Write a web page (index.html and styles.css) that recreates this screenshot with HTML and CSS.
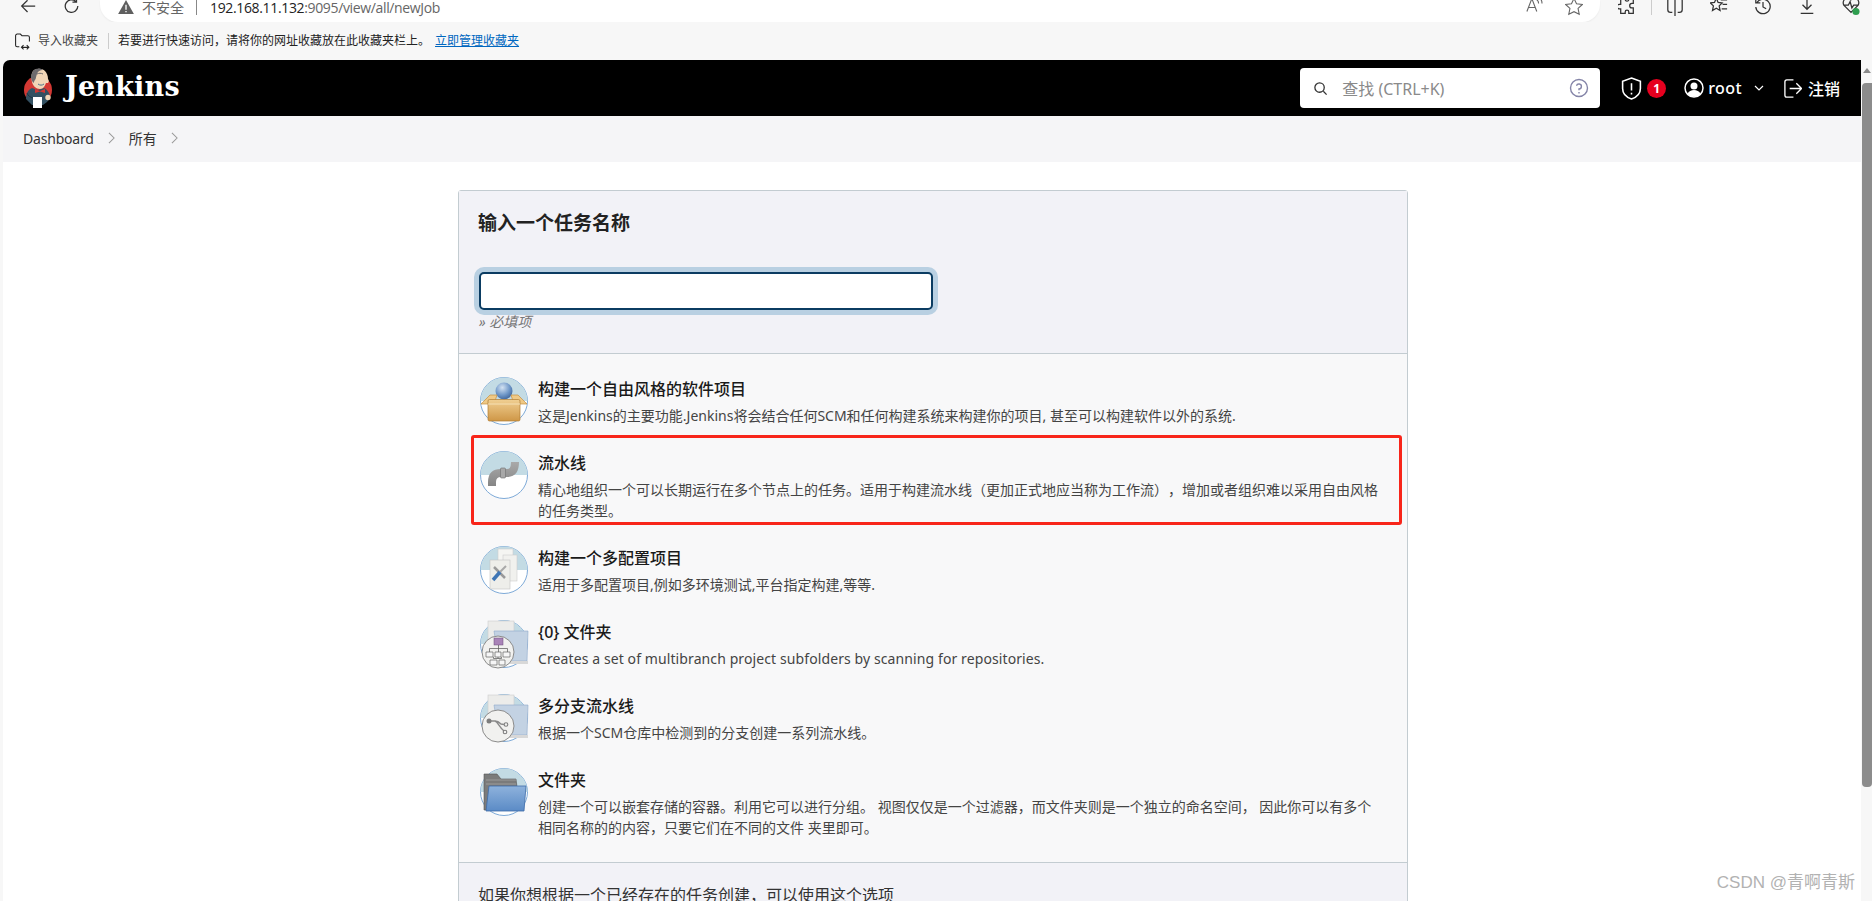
FILE: index.html
```html
<!DOCTYPE html>
<html lang="zh-CN">
<head>
<meta charset="utf-8">
<title>Jenkins</title>
<link rel="stylesheet" href="styles.css">
</head>
<body>
<div class="toolbar">
  <div class="nav-btns">
    <svg class="tb-icon" viewBox="0 0 20 20"><path d="M18 9H3M9.500 2.500 3 9l6.500 6.500"/></svg>
    <svg class="tb-icon" viewBox="0 0 20 20"><path d="M16.500 9a7 7 0 1 1-2.300-5.200M15 0v4.500h-4.500"/></svg>
  </div>
  <div class="address">
    <svg class="warn" viewBox="0 0 18 16"><path d="M9 0 18 16H0Z" fill="#5f5f5f"/><path d="M9 5.500V11M9 12.500v1.500" stroke="#fff" stroke-width="1.500"/></svg>
    <span class="insecure">不安全</span>
    <span class="addr-sep"></span>
    <span class="url">192.168.11.132<span class="url-rest">:9095/view/all/newJob</span></span>
    <span class="addr-tools">
      <svg class="tb-icon thin" viewBox="0 0 20 20"><path d="M1 15 6 2h1l5 13M3 10.500h7M12 2c1.500 1 2 2.500 2 4M15 0c2 1.500 2.800 3.500 2.800 6"/></svg>
      <svg class="tb-icon thin" viewBox="0 0 20 20"><path d="m10 .5 2.800 6 6.500.7-4.800 4.400 1.300 6.400L10 15.200 4.200 18l1.300-6.400L.7 7.200l6.500-.7Z"/></svg>
    </span>
  </div>
  <div class="browser-tools">
    <svg class="tb-icon" viewBox="0 0 20 20"><path d="M8 0v1.500a2 2 0 0 0 4 0V0h5v6h-1.500a2.500 2.500 0 0 0 0 5H17v6h-5v-1.500a2 2 0 0 0-4 0V17H3v-5H1.500a2.500 2.500 0 0 1 0-5H3V0Z"/></svg>
    <span class="tool-sep"></span>
    <svg class="tb-icon" viewBox="0 0 20 20"><path d="M10-2v22M7 0H5a3 3 0 0 0-3 3v10a3 3 0 0 0 3 3h2M13 0h2a3 3 0 0 1 3 3v10a3 3 0 0 1-3 3h-2"/></svg>
    <svg class="tb-icon" viewBox="0 0 20 20"><path d="m7 0 2 5 4.500.5-3.300 3.300 1 5L7 11.300 2.800 13.800l1-5L.5 5.500 5 5ZM12 2h7M14 7h5M13 12h6"/></svg>
    <svg class="tb-icon" viewBox="0 0 20 20"><path d="M3 5.500A8 8 0 1 1 2 10M2 0v5.500h5M10 4.500V10l3.500 2"/></svg>
    <svg class="tb-icon" viewBox="0 0 20 20"><path d="M10-1v13M5 7.500l5 5 5-5M3 17h14"/></svg>
    <svg class="tb-icon" viewBox="0 0 20 20"><path d="M10 16 2 8C0 4 3 0 6 0c2 0 3 1 4 2 1-1 2-2 4-2 3 0 6 4 4 8ZM2 8h5l2-4 2 7 2-3h5"/><circle cx="15.500" cy="15" r="4" fill="#2e9e4f" stroke="none"/></svg>
  </div>
</div>

<div class="favbar">
  <svg class="fav-icon" viewBox="0 0 16 16"><path d="M5 13H3a1.500 1.500 0 0 1-1.500-1.500v-9A1.500 1.500 0 0 1 3 1h3l1.500 1.500H13A1.500 1.500 0 0 1 14.500 4v4M7 13.500h7M9 11.500l-2 2 2 2M12 11.500l2 2-2 2"/></svg>
  <span class="fav-import">导入收藏夹</span>
  <span class="fav-sep"></span>
  <span class="fav-tip">若要进行快速访问，请将你的网址收藏放在此收藏夹栏上。</span>
  <a class="fav-link" href="#">立即管理收藏夹</a>
</div>

<div class="viewport">
  <div class="page">
    <header class="jenkins-header">
      <div class="brand">
        <svg class="logo" viewBox="0 0 28 40">
          <circle cx="14" cy="22" r="14" fill="#d33833"/>
          <path d="M2 31c0-6 2-9 6-11l6 2 6-2c4 2 6 6 6 10l-3 4-4 3H8Z" fill="#335061"/>
          <path d="M9 3c3-3 9-3 12 0 2 2 3 5 3 8 1 1 1 3 0 4-1 0-1 0-2 0-1 3-3 6-6 6-4 0-7-3-8-7-1-4-1-8 1-11Z" fill="#f0d6b7"/>
          <path d="M9 3c3-3 7-3 10-1-3 0-5 1-6 4-1 2-1 5-2 6-1 1-1 2-1 3-2-1-3-4-3-6 0-2 1-4 2-6Z" fill="#6d6b6d"/>
          <path d="M13 6c2-1 4-1 6 0" fill="none" stroke="#6d6b6d" stroke-width="1"/>
          <path d="M14 16c2 1.500 4 1.500 6 0" fill="none" stroke="#49728b" stroke-width="1"/>
          <path d="M11 21l5 2 5-2v4l-5-1.500L11 25Z" fill="#d33833"/>
          <path d="M9 29h9v11H9Z" fill="#fff"/>
          <path d="M3 25c1 3 3 4 6 5" fill="none" stroke="#1f3644" stroke-width="1"/>
          <circle cx="24" cy="29.500" r="2.700" fill="#f0d6b7"/>
        </svg>
        <span class="brand-name">Jenkins</span>
      </div>
      <div class="header-right">
        <div class="search">
          <svg class="search-icon" viewBox="0 0 16 16"><circle cx="7" cy="7" r="5"/><path d="m11 11 3.500 3.500"/></svg>
          <span class="search-text">查找 (CTRL+K)</span>
          <svg class="help-icon" viewBox="0 0 20 20"><circle cx="10" cy="10" r="8.500"/><path d="M7.500 7.800A2.500 2.500 0 1 1 10 11v1.200M10 14v1.500"/></svg>
        </div>
        <div class="alert">
          <svg class="shield" viewBox="0 0 20 22"><path d="M10 1 18.500 4v7c0 5-4 8.500-8.500 10C5.500 19.500 1.500 16 1.500 11V4Z"/><path d="M10 6v7M10 15v1.800"/></svg>
          <span class="badge">1</span>
        </div>
        <div class="user">
          <svg class="avatar" viewBox="0 0 20 20"><circle cx="10" cy="10" r="9" fill="none" stroke="#fff" stroke-width="1.500"/><circle cx="10" cy="8" r="3.500" fill="#fff"/><path d="M3.500 16c1-3 4-4 6.500-4s5.500 1 6.500 4a9 9 0 0 1-13 0Z" fill="#fff"/></svg>
          <span class="user-name">root</span>
          <svg class="caret" viewBox="0 0 10 6"><path d="m1 1 4 4 4-4"/></svg>
        </div>
        <div class="logout">
          <svg class="logout-icon" viewBox="0 0 20 20"><path d="M11 1H4a2 2 0 0 0-2 2v14a2 2 0 0 0 2 2h7M7 10h12M14 4.500l5.500 5.500-5.500 5.500"/></svg>
          <span>注销</span>
        </div>
      </div>
    </header>

    <nav class="breadcrumbs">
      <span class="crumb-latin">Dashboard</span>
      <svg class="crumb-sep" viewBox="0 0 8 14"><path d="m1 1 6 6-6 6"/></svg>
      <span>所有</span>
      <svg class="crumb-sep" viewBox="0 0 8 14"><path d="m1 1 6 6-6 6"/></svg>
    </nav>

    <main class="content">
      <section class="card">
        <div class="name-panel">
          <h2 class="panel-title">输入一个任务名称</h2>
          <div class="name-input"></div>
          <div class="hint">» 必填项</div>
        </div>

        <ul class="job-list">
          <li class="job">
            <svg class="job-icon" viewBox="0 0 48 48">
              <defs>
                <radialGradient id="ball" cx=".4" cy=".3" r=".8"><stop offset="0" stop-color="#d3e2f2"/><stop offset=".55" stop-color="#6f97c8"/><stop offset="1" stop-color="#34598f"/></radialGradient>
                <linearGradient id="box" x1="0" y1="0" x2="0" y2="1"><stop offset="0" stop-color="#f0cf92"/><stop offset="1" stop-color="#cf9747"/></linearGradient>
                <linearGradient id="folder" x1="0" y1="0" x2="0" y2="1"><stop offset="0" stop-color="#8eb2dc"/><stop offset="1" stop-color="#5b8bc6"/></linearGradient>
                <linearGradient id="pipe" x1="0" y1="0" x2="0" y2="1"><stop offset="0" stop-color="#a9a9a9"/><stop offset="1" stop-color="#858585"/></linearGradient>
              </defs>
              <circle cx="24" cy="24" r="23.500" fill="#fff" stroke="#7eaad8"/>
              <path d="M.5 24a23.500 23.500 0 0 1 47 0Z" fill="#c3dbe4"/>
              <circle cx="24" cy="14" r="8.500" fill="url(#ball)"/>
              <path d="M1 27 10 18h7l-3 9ZM47 27l-9-9h-7l3 9Z" fill="#efc986" stroke="#c58f41" stroke-width=".7"/>
              <rect x="8" y="22.500" width="32" height="21.500" rx="1.500" fill="url(#box)" stroke="#b07c33" stroke-width=".7"/>
              <path d="M8 27h32" stroke="#f6e0b5" stroke-width="1"/>
            </svg>
            <div class="job-text">
              <div class="job-title">构建一个自由风格的软件项目</div>
              <div class="job-desc">这是Jenkins的主要功能.Jenkins将会结合任何SCM和任何构建系统来构建你的项目, 甚至可以构建软件以外的系统.</div>
            </div>
          </li>
          <li class="job job-marked">
            <svg class="job-icon" viewBox="0 0 48 48">
              <circle cx="24" cy="24" r="23.500" fill="#fff" stroke="#7eaad8"/>
              <path d="M.5 24a23.500 23.500 0 0 1 47 0Z" fill="#c3dbe4"/>
              <path d="M12 35v-4c0-6 3-9 9-9h6c5 0 8-3 8-11" fill="none" stroke="url(#pipe)" stroke-width="8"/>
              <rect x="20.500" y="17" width="5" height="10" rx="1" fill="#a8a8a8" stroke="#6f6f6f" stroke-width=".6"/>
            </svg>
            <div class="job-text">
              <div class="job-title">流水线</div>
              <div class="job-desc">精心地组织一个可以长期运行在多个节点上的任务。适用于构建流水线（更加正式地应当称为工作流），增加或者组织难以采用自由风格的任务类型。</div>
            </div>
          </li>
          <li class="job">
            <svg class="job-icon" viewBox="0 0 48 48">
              <circle cx="24" cy="24" r="23.500" fill="#fff" stroke="#7eaad8"/>
              <path d="M.5 24a23.500 23.500 0 0 1 47 0Z" fill="#c3dbe4"/>
              <rect x="18" y="3" width="15" height="26" fill="#f5f5f2" stroke="#ccc" stroke-width=".6"/>
              <rect x="23" y="9" width="14" height="26" fill="#f1f1ee" stroke="#ccc" stroke-width=".6"/>
              <rect x="10" y="14" width="20" height="29" fill="#eeeeea" stroke="#c4c4c4" stroke-width=".6"/>
              <path d="m14 21 11 11" stroke="#9a9a9a" stroke-width="2.500"/>
              <path d="M26 20 19 27" stroke="#a8a8a8" stroke-width="2"/>
              <path d="M20 26 13 34" stroke="#3f76b5" stroke-width="3.500"/>
            </svg>
            <div class="job-text">
              <div class="job-title">构建一个多配置项目</div>
              <div class="job-desc">适用于多配置项目,例如多环境测试,平台指定构建,等等.</div>
            </div>
          </li>
          <li class="job">
            <svg class="job-icon" viewBox="0 0 48 48">
              <circle cx="24" cy="24" r="23.500" fill="#fff" stroke="#7eaad8"/>
              <path d="M.5 24a23.500 23.500 0 0 1 47 0Z" fill="#c3dbe4"/>
              <rect x="8" y="1" width="26" height="30" fill="#ececea" stroke="#ccc" stroke-width=".6"/>
              <path d="M14 11h34l-1 30H28l-10-6Z" fill="#c3d2e3" stroke="#8eaacb" stroke-width=".6"/>
              <path d="M26 41h22v3H26Z" fill="#d8d8d8"/>
              <circle cx="18" cy="32" r="16" fill="#f1f1ef" stroke="#8b8b8b"/>
              <rect x="14" y="18" width="9" height="7" fill="#a984b8" stroke="#6d4b7c" stroke-width=".5"/>
              <path d="M18.500 25v3.500M9.500 32v-3.500h18V32M18.500 28.500V32M13.500 37v1.500h8V37M18 37v1.500" fill="none" stroke="#555" stroke-width=".7"/>
              <path d="M6 32h7v5H6ZM15 32h6v5h-6ZM23 32h7v5h-7ZM10 40h7v5h-7ZM19 40h6v5h-6Z" fill="#f6f6f6" stroke="#666" stroke-width=".7"/>
            </svg>
            <div class="job-text">
              <div class="job-title">{0} 文件夹</div>
              <div class="job-desc job-desc-latin">Creates a set of multibranch project subfolders by scanning for repositories.</div>
            </div>
          </li>
          <li class="job">
            <svg class="job-icon" viewBox="0 0 48 48">
              <circle cx="24" cy="24" r="23.500" fill="#fff" stroke="#7eaad8"/>
              <path d="M.5 24a23.500 23.500 0 0 1 47 0Z" fill="#c3dbe4"/>
              <rect x="8" y="1" width="26" height="30" fill="#ececea" stroke="#ccc" stroke-width=".6"/>
              <path d="M14 11h34l-1 30H28l-10-6Z" fill="#c3d2e3" stroke="#8eaacb" stroke-width=".6"/>
              <path d="M26 41h22v3H26Z" fill="#d8d8d8"/>
              <circle cx="18" cy="32" r="16" fill="#f1f1ef" stroke="#8b8b8b"/>
              <path d="M9 27h6c3 0 4 1 6 3l3 .5M15 27c3 1 4 6 9 10" fill="none" stroke="#8a8a8a" stroke-width="1.400"/>
              <circle cx="9" cy="27" r="2.500" fill="#7d7d7d"/>
              <circle cx="26" cy="30.500" r="1.800" fill="none" stroke="#7d7d7d" stroke-width="1.100"/>
              <circle cx="25" cy="38" r="1.800" fill="none" stroke="#7d7d7d" stroke-width="1.100"/>
            </svg>
            <div class="job-text">
              <div class="job-title">多分支流水线</div>
              <div class="job-desc">根据一个SCM仓库中检测到的分支创建一系列流水线。</div>
            </div>
          </li>
          <li class="job">
            <svg class="job-icon" viewBox="0 0 48 48">
              <circle cx="24" cy="24" r="23.500" fill="#fff" stroke="#7eaad8"/>
              <path d="M.5 24a23.500 23.500 0 0 1 47 0Z" fill="#c3dbe4"/>
              <path d="M4 42V6h13l4 5h15l1 8v23Z" fill="#7b7b7b" stroke="#555" stroke-width=".6"/>
              <path d="M6 12h30M6 16h30" stroke="#a5a5a5" stroke-width=".8"/>
              <path d="M9 18h37l-2 25H6Z" fill="url(#folder)" stroke="#3d6ba8" stroke-width=".8"/>
            </svg>
            <div class="job-text">
              <div class="job-title">文件夹</div>
              <div class="job-desc">创建一个可以嵌套存储的容器。利用它可以进行分组。 视图仅仅是一个过滤器，而文件夹则是一个独立的命名空间， 因此你可以有多个相同名称的的内容，只要它们在不同的文件 夹里即可。</div>
            </div>
          </li>
        </ul>

        <div class="copy-panel">如果你想根据一个已经存在的任务创建，可以使用这个选项</div>
      </section>
    </main>
    <div class="watermark">CSDN @青啊青斯</div>
  </div>
  <div class="scrollbar">
    <span class="scroll-up"></span>
    <span class="scroll-thumb"></span>
  </div>
</div>
</body>
</html>
```

FILE: styles.css
```css
* { box-sizing: border-box; }

html, body {
  margin: 0;
  height: 901px;
  overflow: hidden;
}

body {
  display: flex;
  flex-direction: column;
  background: #f7f7f7;
  color: #222;
  font-family: "Noto Sans", "Noto Sans CJK SC", sans-serif;
  font-size: 14px;
  text-spacing-trim: space-all;
}

/* browser chrome */
.toolbar {
  display: flex;
  height: 22px;
  padding-left: 19px;
  flex: none;
  overflow: hidden;
}

.tb-icon {
  width: 18px;
  height: 18px;
  flex: none;
  margin-top: -2px;
  fill: none;
  stroke: #333;
  stroke-width: 1.400;
}

.tb-icon.thin { stroke: #666; stroke-width: 1.200; }

.nav-btns {
  display: flex;
  gap: 26px;
  width: 81px;
  flex: none;
}

.address {
  display: flex;
  align-items: flex-start;
  width: 1500px;
  height: 22px;
  padding-left: 18px;
  background: #fff;
  border-radius: 0 0 18px 18px;
  box-shadow: 0 1px 2px rgba(0, 0, 0, .05);
  margin-right: 18px;
  flex: none;
}

.warn { width: 16px; height: 14px; flex: none; }

.insecure {
  margin-left: 8px;
  font-size: 14px;
  line-height: 15px;
  color: #666;
}

.addr-sep {
  width: 1px;
  height: 15px;
  margin: 0 13px 0 12px;
  background: #888;
}

.url {
  font-size: 14px;
  line-height: 15px;
  color: #222;
  font-family: "Open Sans", "Noto Sans", sans-serif;
  letter-spacing: -.35px;
}

.url-rest { color: #666; }

.addr-tools {
  display: flex;
  gap: 21px;
  margin-left: auto;
  padding-right: 17px;
}

.browser-tools {
  display: flex;
  gap: 26px;
}

.tool-sep {
  width: 1px;
  height: 15px;
  margin: 0 -11.500px;
  background: #ccc;
  flex: none;
}

.favbar {
  display: flex;
  align-items: center;
  height: 38px;
  padding-left: 14px;
  font-size: 12px;
  flex: none;
  line-height: 16px;
}

.fav-icon {
  width: 17px;
  height: 17px;
  fill: none;
  stroke: #222;
  stroke-width: 1;
  margin-right: 7px;
}

.fav-import { color: #444; }

.fav-sep {
  width: 1px;
  height: 16px;
  margin: 0 9px 0 10px;
  background: #ccc;
}

.fav-tip { color: #222; }

.fav-link {
  margin-left: 5px;
  color: #0067c0;
  text-decoration: underline;
}

/* page */
.viewport {
  display: flex;
  flex: 1;
  min-height: 0;
}

.page {
  position: relative;
  flex: 1;
  min-width: 0;
  margin-left: 3px;
  background: #fff;
  border-radius: 7px 0 0 0;
  overflow: hidden;
}

.jenkins-header {
  display: flex;
  align-items: center;
  justify-content: space-between;
  height: 56px;
  background: #000;
  color: #fff;
  padding: 0 21px;
}

.brand {
  display: flex;
  align-items: center;
  gap: 13px;
}

.logo { width: 28px; height: 40px; }

.brand-name {
  font-family: "DejaVu Serif", serif;
  font-weight: 700;
  font-size: 27px;
  line-height: 40px;
  letter-spacing: .2px;
  margin-bottom: 3px;
}

.header-right {
  display: flex;
  align-items: center;
}

.search {
  display: flex;
  align-items: center;
  width: 300px;
  height: 40px;
  background: #fff;
  border-radius: 4px;
  padding: 0 11px 0 13px;
  margin-right: 21px;
}

.search-icon {
  width: 15px;
  height: 15px;
  fill: none;
  stroke: #333;
  stroke-width: 1.400;
  margin-right: 14px;
}

.search-text {
  flex: 1;
  color: #8a8a8a;
  font-size: 16px;
}

.help-icon {
  width: 20px;
  height: 20px;
  fill: none;
  stroke: #8585a8;
  stroke-width: 1.400;
}

.alert {
  display: flex;
  align-items: center;
  gap: 5px;
  margin-right: 18px;
}

.shield {
  width: 21px;
  height: 23px;
  fill: none;
  stroke: #fff;
  stroke-width: 1.500;
}

.badge {
  width: 19px;
  height: 19px;
  border-radius: 50%;
  background: #e6001f;
  color: #fff;
  font-size: 12px;
  font-weight: 700;
  line-height: 19px;
  text-align: center;
}

.user {
  display: flex;
  align-items: center;
  font-size: 16px;
  font-weight: 500;
  margin-right: 19px;
}

.user-name { letter-spacing: .4px; }

.avatar { width: 20px; height: 20px; margin-right: 4px; }

.caret {
  width: 10px;
  height: 6px;
  margin-left: 12px;
  fill: none;
  stroke: #fff;
  stroke-width: 1.200;
}

.logout {
  display: flex;
  align-items: center;
  gap: 6px;
  font-size: 16px;
  font-weight: 500;
}

.logout-icon {
  width: 19px;
  height: 19px;
  fill: none;
  stroke: #fff;
  stroke-width: 1.400;
}

.breadcrumbs {
  display: flex;
  align-items: center;
  height: 46px;
  padding: 0 0 2px 20px;
  background: #f5f5f7;
  color: #333;
  font-size: 14px;
}

.crumb-latin { letter-spacing: -.2px; }

.crumb-sep {
  width: 7px;
  height: 12px;
  margin: 0 14px;
  fill: none;
  stroke: #999;
  stroke-width: 1.200;
}

.content {
  padding: 28px 0 0 455px;
}

.card {
  width: 950px;
  border: 1px solid #c3ccd1;
  border-radius: 3px 3px 0 0;
  background: #f8f8f9;
}

.name-panel {
  height: 163px;
  padding: 19px 20px 0;
  background: #f2f2f7;
  border-bottom: 1px solid #c3ccd1;
}

.panel-title {
  margin: 0 0 36px -1px;
  font-size: 19px;
  line-height: 26px;
  font-weight: 600;
  color: #222;
}

.name-input {
  width: 454px;
  height: 38px;
  background: #fff;
  border: 2px solid #0b3c62;
  border-radius: 5px;
  box-shadow: 0 0 0 5px #b9d0e2;
}

.hint {
  margin-top: 2px;
  font-size: 14px;
  line-height: 20px;
  font-style: italic;
  color: #777;
}

.job-list {
  list-style: none;
  margin: 0;
  padding: 23px 24px 0 21px;
}

.job {
  display: flex;
  gap: 10px;
  padding-bottom: 25px;
}

.job:last-child { padding-bottom: 24px; }

.job-marked { position: relative; }

.job-marked::after {
  content: "";
  position: absolute;
  top: -16px;
  left: -9px;
  right: -19px;
  bottom: 21px;
  border: 3px solid #f8251a;
  border-radius: 3px;
}

.job-icon {
  width: 48px;
  height: 48px;
  flex: none;
  overflow: visible;
}

.job-text { flex: 1; min-width: 0; }

.job-title {
  font-size: 16px;
  line-height: 25px;
  font-weight: 500;
  color: #1a1a1a;
  margin-bottom: 3px;
}

.job-desc {
  font-size: 14px;
  line-height: 21px;
  color: #444;
}

.job-desc-latin { letter-spacing: .1px; }

.copy-panel {
  height: 60px;
  padding: 20px 20px 0 19px;
  background: #f2f2f7;
  border-top: 1px solid #c3ccd1;
  font-size: 16px;
  line-height: 24px;
  color: #333;
}

.watermark {
  position: absolute;
  right: 6px;
  bottom: 8px;
  font-size: 17px;
  line-height: 20px;
  color: #b2b2b2;
  font-family: "Liberation Sans", "Noto Sans CJK SC", sans-serif;
}

.scrollbar {
  display: flex;
  flex-direction: column;
  align-items: center;
  width: 11px;
  flex: none;
  background: #f7f7f7;
  padding-top: 8px;
}

.scroll-up {
  width: 0;
  height: 0;
  border-left: 4px solid transparent;
  border-right: 4px solid transparent;
  border-bottom: 5px solid #8a8a8a;
  margin-bottom: 10px;
}

.scroll-thumb {
  width: 10px;
  height: 704px;
  margin-left: 1px;
  background: #8c8c8c;
  border-radius: 4px 0 4px 4px;
}
```
